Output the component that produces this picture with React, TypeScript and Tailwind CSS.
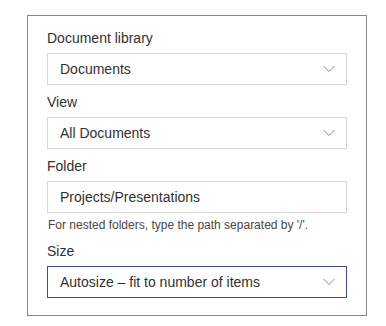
import React from 'react';

const font = { fontFamily: '"Liberation Sans", Arial, sans-serif' };

const Chevron = () => (
    <svg width="14" height="8" viewBox="0 0 14 8" className="shrink-0">
        <path d="M1.5 1 L7 6.5 L12.5 1" fill="none" stroke="#8a8886" strokeWidth="1" />
    </svg>
);

interface FieldProps {
    label: string;
    value: string;
    dropdown?: boolean;
    focused?: boolean;
}

const Field: React.FC<FieldProps> = ({ label, value, dropdown, focused }) => (
    <div className="flex flex-col">
        {/* Label */}
        <div className="text-[14px] leading-5 pt-[7px] pb-[5px] text-[#323130]">{label}</div>

        {/* Input / dropdown box */}
        <div
            className={
                focused
                    ? 'flex items-center h-8 pl-3 pr-[10px] bg-white border border-[#3b4aa0]'
                    : 'flex items-center h-8 pl-3 pr-[10px] bg-white border border-[#dad8d6]'
            }
        >
            <span className="flex-1 text-[14px] leading-5 text-[#323130] truncate">{value}</span>
            {dropdown && <Chevron />}
        </div>
    </div>
);

export default function App() {
    return (
        <div className="w-[386px] h-[326px] bg-white pt-[15px] pl-[27px]" style={font}>
            <div className="w-[340px] h-[301px] border border-[#8a8886] px-[19px] pt-[5px]">
                <Field label="Document library" value="Documents" dropdown />
                <Field label="View" value="All Documents" dropdown />
                <Field label="Folder" value="Projects/Presentations" />
                <div className="text-[12px] leading-4 mt-[4px] mb-[1px] pl-px text-[#484644]">
                    For nested folders, type the path separated by '/'.
                </div>
                <Field label="Size" value="Autosize – fit to number of items" dropdown focused />
            </div>
        </div>
    );
}
